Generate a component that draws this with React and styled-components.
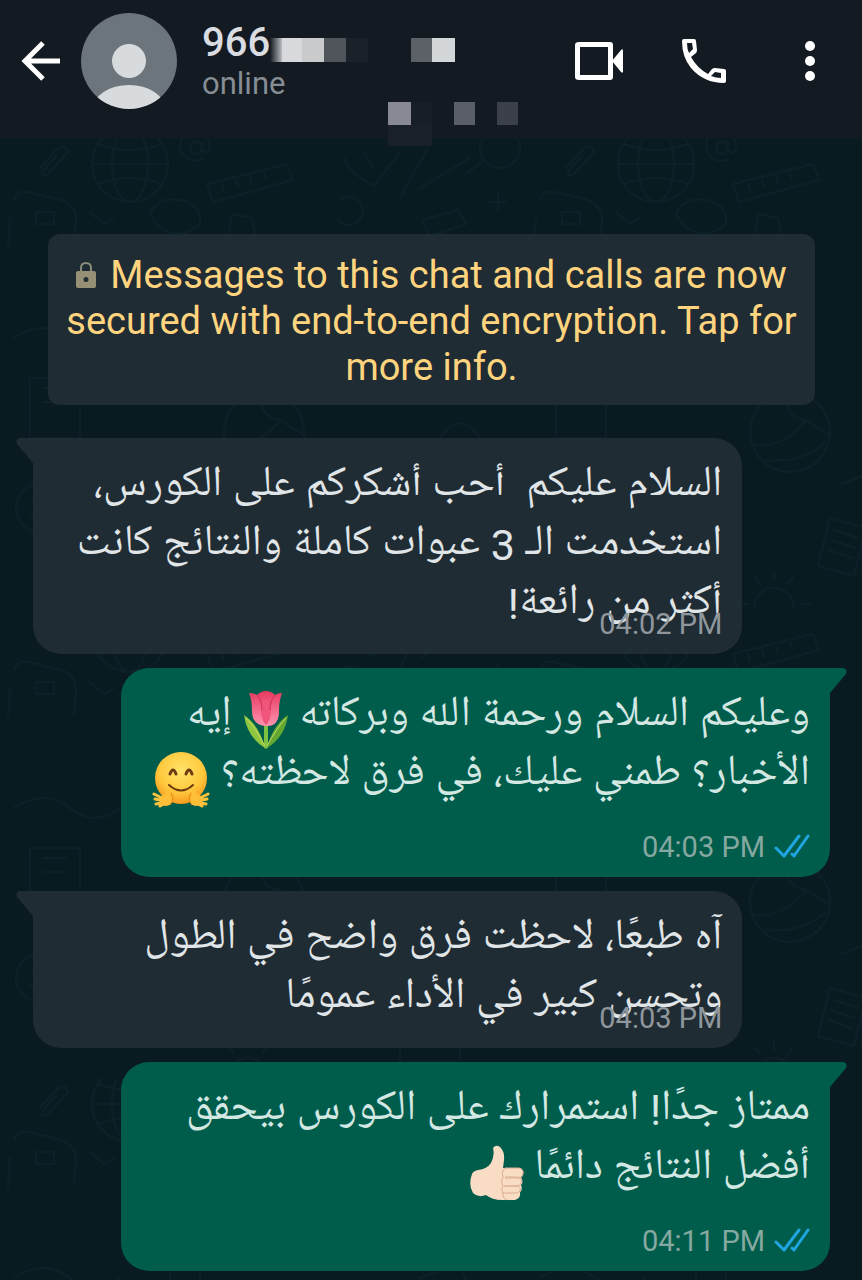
import styled, { createGlobalStyle } from 'styled-components';

const doodle = `
<svg xmlns="http://www.w3.org/2000/svg" width="526" height="470" viewBox="0 0 526 470">
<g fill="none" stroke="#0e2027" stroke-width="2" stroke-linecap="round" stroke-linejoin="round">
<circle cx="130" cy="26" r="38"/><ellipse cx="130" cy="26" rx="18" ry="38"/><path d="M92 26h76M98 6q32 12 64 0M98 46q32-12 64 0"/>
<path d="M207 46l80-20 6 16-80 22zM222 46l2 7M236 42l2 7M250 38l2 7M264 34l2 7"/>
<circle cx="196" cy="10" r="6"/><path d="M202 4v9q8 4 8-6a15 15 0 1 0-8 14"/>
<path d="M40 30l18-20q8-4 10 4l-20 22q-6 4-6-2l14-16"/>
<path d="M14 62q2-10 14-8l34 8q14 6 14 20l-2 24M10 80l-2 30M36 74h18v12H36zM90 74l14 12 10-6"/>
<path d="M344 20q4 14 30 28l26-34M364 14l8 14M400 60l28-50M420 50l50-30"/>
<circle cx="500" cy="10" r="20"/><path d="M484 22l-18 14M340 62a14 14 0 1 1-2 20M498 56v16M490 64h16M422 82l36-10 8 14-36 12z"/>
<path d="M150 76q8-18 30-14t20 24q-20 18-42 2zM232 76l20 4 4 20-28 2z"/>
<circle cx="264" cy="294" r="40"/><path d="M226 306q30 6 54-24M262 254q-4 26 18 28M280 282l22 14M240 322q34 4 60-18"/>
<path d="M304 380l36 10-12 48-36-10zM308 392l24 8M305 402l24 8M302 412l24 8M316 346l30-12"/>
<circle cx="248" cy="470" r="20"/><path d="M248 442v-8M262 446l5-7M234 446l-5-7M276 466h8M222 466h-8"/>
<path d="M14 200q30-20 56 0t50 0M30 240h50v60H30zM44 250h22M44 264h22"/>
<circle cx="40" cy="370" r="24"/><path d="M30 376q10 10 20 0M32 362v2M48 362v2"/>
<path d="M110 330l8 16 18 2-13 12 4 18-17-9-16 9 3-18-12-12 17-2z"/>
<path d="M420 200l40-14 14 40-40 14zM440 300q20-30 40 0t-20 40q-30-10-20-40M400 430h60v24h-60z"/>
<path d="M170 170v60M170 170l30-8v56M160 232a8 6 0 1 0 10-4M190 220a8 6 0 1 0 10-4"/>
</g>
</svg>`;

const GlobalStyle = createGlobalStyle`
  * {
    box-sizing: border-box;
  }

  body {
    margin: 0;
    background: #0a1a21;
    font-family: Roboto, 'Noto Naskh Arabic UI', 'Noto Naskh Arabic', 'Noto Sans Arabic', 'DejaVu Sans', sans-serif;
  }
`;

const Screen = styled.div`
  min-height: 100vh;
  background: #0a1a21 url('data:image/svg+xml,${encodeURIComponent(doodle)}') 0 138px;
`;

const Header = styled.header`
  display: flex;
  align-items: flex-start;
  height: 138px;
  padding: 12px 24px 0 20px;
  background: #131a21;
`;

const IconButton = styled.button`
  display: flex;
  align-items: center;
  justify-content: center;
  width: ${(props) => props.$width}px;
  height: 98px;
  padding: 0;
  border: 0;
  background: none;
  color: #fff;
`;

const Avatar = styled.svg`
  width: 96px;
  height: 96px;
  margin: 1px 25px 0 19px;
  flex: none;
`;

const Contact = styled.div`
  display: flex;
  flex-direction: column;
  flex: 1;
  min-width: 0;
`;

const NameRow = styled.div`
  display: flex;
  align-items: center;
  height: 60px;
`;

const Name = styled.h1`
  margin: 0;
  padding-top: 2px;
  color: #d9dce0;
  font-size: 40px;
  font-weight: 500;
  line-height: 60px;
`;

const Status = styled.span`
  color: #868d94;
  font-size: 31px;
  line-height: 24px;
`;

const Mosaic = styled.svg`
  flex: none;
  margin-top: ${(props) => props.$top}px;
  margin-left: ${(props) => props.$left}px;
`;

const Actions = styled.nav`
  display: flex;
  gap: 56px;
`;

const Chat = styled.main`
  display: flex;
  flex-direction: column;
  gap: 14px;
  padding: 96px 32px 10px 33px;
`;

const Notice = styled.button`
  margin: 0 15px 19px;
  padding: 18px 12px 15px;
  border: 0;
  border-radius: 12px;
  background: #202c33;
  color: #ffd47f;
  font-family: inherit;
  font-size: 38px;
  line-height: 46px;
  text-align: center;
`;

const Lock = styled.svg`
  width: 20px;
  height: 26px;
  margin-right: 14px;
`;

const Bubble = styled.article`
  position: relative;
  align-self: ${(props) => (props.$sent ? 'flex-end' : 'flex-start')};
  width: 89%;
  padding: ${(props) => (props.$sent ? '19px 20px 72px' : '19px 20px 20px')};
  border-radius: ${(props) => (props.$sent ? '28px 0 28px 28px' : '0 28px 28px 28px')};
  background: ${(props) => (props.$sent ? '#005c4b' : '#202c33')};
  color: ${(props) => (props.$sent ? '#d3e8e3' : '#e0e5e8')};
`;

const Tail = styled.svg`
  position: absolute;
  top: 0;
  width: 18px;
  height: 27px;
  ${(props) => (props.$sent ? 'right: -17px;' : 'left: -17px; transform: scaleX(-1);')}
`;

const Text = styled.p`
  margin: 0;
  font-size: 43px;
  line-height: 59px;
  white-space: pre;
`;

const Meta = styled.footer`
  position: absolute;
  right: 20px;
  bottom: 14px;
  display: flex;
  align-items: center;
  gap: 9px;
  color: ${(props) => (props.$sent ? '#85a8a1' : '#8f979d')};
  font-size: 29px;
  line-height: 32px;
`;

const Emoji = styled.svg`
  width: ${(props) => props.$width}px;
  height: 58px;
  margin: -8px 0;
  vertical-align: middle;
`;

const Tulip = () => (
  <Emoji $width={46} viewBox="0 0 46 58" role="img" aria-label="tulip">
    <defs>
      <linearGradient id="petal" x1="0" y1="0" x2="0" y2="1">
        <stop offset="0" stopColor="#e5395f" />
        <stop offset="1" stopColor="#ff93b0" />
      </linearGradient>
    </defs>
    <path d="M21 34h4v23q-2 1-4 0z" fill="#7cc142" />
    <path d="M22 57Q4 46 1 24q15 10 21 33z" fill="#8fc63f" />
    <path d="M24 57q18-11 21-33-15 10-21 33z" fill="#64a833" />
    <path d="M22 55Q12 36 3 27M24 55q10-19 19-28" fill="none" stroke="#c5dc62" strokeWidth="1" />
    <path d="M6 2q5 0 8 2 4-4 9-4t9 4q3-2 7-2-3 8-3 18 0 16-13 15Q9 34 9 20 9 9 6 2z" fill="url(#petal)" />
    <path d="M14 4q4 5 4 15t5 15q5-5 5-15t4-15q-4 3-6 8l-3-4-4 4q-2-5-5-8z" fill="#f0567b" />
    <path d="M14 4q5 5 5 15M32 4q-5 5-5 15" fill="none" stroke="#cf2c52" strokeWidth="1" />
  </Emoji>
);

const Hug = () => (
  <Emoji $width={58} viewBox="0 0 58 58" role="img" aria-label="hugging face">
    <defs>
      <radialGradient id="face" cx="0.5" cy="0.35" r="0.65">
        <stop offset="0" stopColor="#ffe36a" />
        <stop offset="0.65" stopColor="#ffc83c" />
        <stop offset="1" stopColor="#f79a1e" />
      </radialGradient>
    </defs>
    <circle cx="29" cy="28" r="26" fill="url(#face)" />
    <path d="M18 24q3-8 6 0M34 24q3-8 6 0" fill="none" stroke="#6b3a10" strokeWidth="3" strokeLinecap="round" />
    <path d="M17 35q12 11 24 0" fill="none" stroke="#6b3a10" strokeWidth="2" strokeLinecap="round" />
    <g fill="none" stroke="#ffc23c" strokeWidth="3" strokeLinecap="round">
      <path d="M2 44l10 5M3 49l10 2M4 54l10-2M16 42v8M8 56l8-4" />
      <path d="M56 44l-10 5M55 49l-10 2M54 54l-10-2M42 42v8M50 56l-8-4" />
    </g>
    <ellipse cx="14" cy="50" rx="6" ry="6" fill="#ffbe37" />
    <ellipse cx="44" cy="50" rx="6" ry="6" fill="#ffbe37" />
    <path d="M19 43q4 6-1 12M39 43q-4 6 1 12" fill="none" stroke="#e98a17" strokeWidth="1" />
  </Emoji>
);

const Thumb = () => (
  <Emoji $width={54} viewBox="0 0 54 58" role="img" aria-label="thumbs up">
    <path d="M23 4q3-4 7-1 5 5 4 13l-1 8h16q5 1 4 6-1 2-2 3 3 5 0 8 2 5-1 7 1 6-5 8H32q-10 0-16-5-8 3-13-2Q-2 41 2 30q1-3 6-4 9-1 13-7 4-8 2-15z" fill="#f9dcc4" />
    <path d="M35 24h14q5 1 4 6t-6 4H35M35 33h14q4 3 2 7-2 2-5 2H34M34 42h14q4 3 2 5-2 3-5 2H33M36 24q-5 2-3 9-3 5 0 9-3 3 0 7-1 5 4 7" fill="none" stroke="#dcae94" strokeWidth="1" />
  </Emoji>
);

const Ticks = () => (
  <svg width="36" height="26" viewBox="0 0 36 26" role="img" aria-label="read">
    <path d="M2 14l8 8L25 2M18 20l2 2L34 2" fill="none" stroke="#1fa5e0" strokeWidth="3" strokeLinecap="round" strokeLinejoin="round" />
  </svg>
);

const messages = [
  {
    id: 1,
    time: '04:02 PM',
    text: 'السلام عليكم  أحب أشكركم على الكورس،\nاستخدمت الـ 3 عبوات كاملة والنتائج كانت\nأكثر من رائعة!',
  },
  {
    id: 2,
    sent: true,
    time: '04:03 PM',
    text: (
      <>
        وعليكم السلام ورحمة الله وبركاته <Tulip /> إيه{'\n'}
        الأخبار؟ طمني عليك، في فرق لاحظته؟ <Hug />
      </>
    ),
  },
  {
    id: 3,
    time: '04:03 PM',
    text: 'آه طبعًا، لاحظت فرق واضح في الطول\nوتحسن كبير في الأداء عمومًا',
  },
  {
    id: 4,
    sent: true,
    time: '04:11 PM',
    text: (
      <>
        ممتاز جدًا! استمرارك على الكورس بيحقق{'\n'}
        أفضل النتائج دائمًا <Thumb />
      </>
    ),
  },
];

const Message = ({ sent, time, text }) => (
  <Bubble $sent={sent}>
    <Tail $sent={sent} viewBox="0 0 18 27" aria-hidden="true">
      <path d="M0 0h14q5 1 3 6L1 25v2H0z" fill={sent ? '#005c4b' : '#202c33'} />
    </Tail>
    <Meta $sent={sent}>
      <time>{time}</time>
      {sent && <Ticks />}
    </Meta>
    <Text dir="rtl" lang="ar">
      {text}
    </Text>
  </Bubble>
);

const App = () => (
  <Screen>
    <GlobalStyle />
    <Header>
      <IconButton $width={42} aria-label="Back">
        <svg width="42" height="40" viewBox="0 0 42 40" fill="none" stroke="currentColor" strokeWidth="5">
          <path d="M40 20H6M23 2L5 20l18 18" />
        </svg>
      </IconButton>
      <Avatar viewBox="0 0 96 96" aria-hidden="true">
        <clipPath id="round">
          <circle cx="48" cy="48" r="48" />
        </clipPath>
        <g clipPath="url(#round)">
          <rect width="96" height="96" fill="#6c757b" />
          <circle cx="48" cy="48" r="17" fill="#d8dbdd" />
          <ellipse cx="48" cy="96" rx="36" ry="24" fill="#d8dbdd" />
        </g>
      </Avatar>
      <Contact>
        <NameRow>
          <Name>966</Name>
          <Mosaic $top={15} $left={0} width="186" height="24" aria-hidden="true">
            <defs>
              <linearGradient id="fade">
                <stop offset="0" stopColor="#131a21" />
                <stop offset="1" stopColor="#b9bbc0" />
              </linearGradient>
            </defs>
            <rect width="12" height="24" fill="url(#fade)" />
            <rect x="12" width="20" height="24" fill="#d8d9dc" />
            <rect x="32" width="22" height="24" fill="#c8cacb" />
            <rect x="54" width="22" height="24" fill="#50545b" />
            <rect x="76" width="22" height="24" fill="#1b2128" />
            <rect x="141" width="21" height="24" fill="#5c6067" />
            <rect x="162" width="23" height="24" fill="#d3d7d9" />
          </Mosaic>
        </NameRow>
        <Status>online</Status>
        <Mosaic $top={6} $left={186} width="132" height="44" aria-hidden="true">
          <rect width="23" height="23" fill="#888992" />
          <rect x="23" width="21" height="23" fill="#171e25" />
          <rect y="23" width="44" height="21" fill="#1a2028" />
          <rect x="66" width="21" height="23" fill="#5a5e66" />
          <rect x="109" width="21" height="23" fill="#3c4149" />
        </Mosaic>
      </Contact>
      <Actions aria-label="Chat actions">
        <IconButton $width={52} aria-label="Video call">
          <svg width="50" height="40" viewBox="0 0 50 40" fill="currentColor">
            <path fillRule="evenodd" d="M4 1h31q3 0 3 3v32q0 3-3 3H4q-4 0-4-3V4q0-3 4-3zm1 5v28h28V6z" />
            <path d="M37 20L46 9q2-2 2 1v20q0 3-2 1z" />
          </svg>
        </IconButton>
        <IconButton $width={44} aria-label="Voice call">
          <svg width="44" height="44" viewBox="0 0 44 44" fill="currentColor">
            <path
              fillRule="evenodd"
              d="M2 0h10q2 0 2 2l1 9q0 2-1 3l-5 4q6 11 17 17l4-5q1-1 3-1l9 1q2 0 2 2v10q0 2-2 2Q22 44 9 29 0 18 0 2 0 0 2 0zM5 4q0 6 2 10l4-4-1-6zM29 37q5 2 10 2v-5l-6-1z"
            />
          </svg>
        </IconButton>
        <IconButton $width={56} aria-label="More options">
          <svg width="10" height="40" viewBox="0 0 10 40" fill="currentColor">
            <circle cx="5" cy="5" r="5" />
            <circle cx="5" cy="20" r="5" />
            <circle cx="5" cy="35" r="5" />
          </svg>
        </IconButton>
      </Actions>
    </Header>
    <Chat>
      <Notice>
        <Lock viewBox="0 0 20 26" aria-hidden="true">
          <path d="M5 10V6q0-5 5-5t5 5v4" fill="none" stroke="#8a8b78" strokeWidth="2" />
          <path fillRule="evenodd" d="M2 9h16q2 0 2 2v13q0 2-2 2H2q-2 0-2-2V11q0-2 2-2zm8 6a2 2 0 1 0 0 5 2 2 0 0 0 0-5z" fill="#969077" />
        </Lock>
        Messages to this chat and calls are now secured with end-to-end encryption. Tap for more info.
      </Notice>
      {messages.map((message) => (
        <Message key={message.id} {...message} />
      ))}
    </Chat>
  </Screen>
);

export default App;
